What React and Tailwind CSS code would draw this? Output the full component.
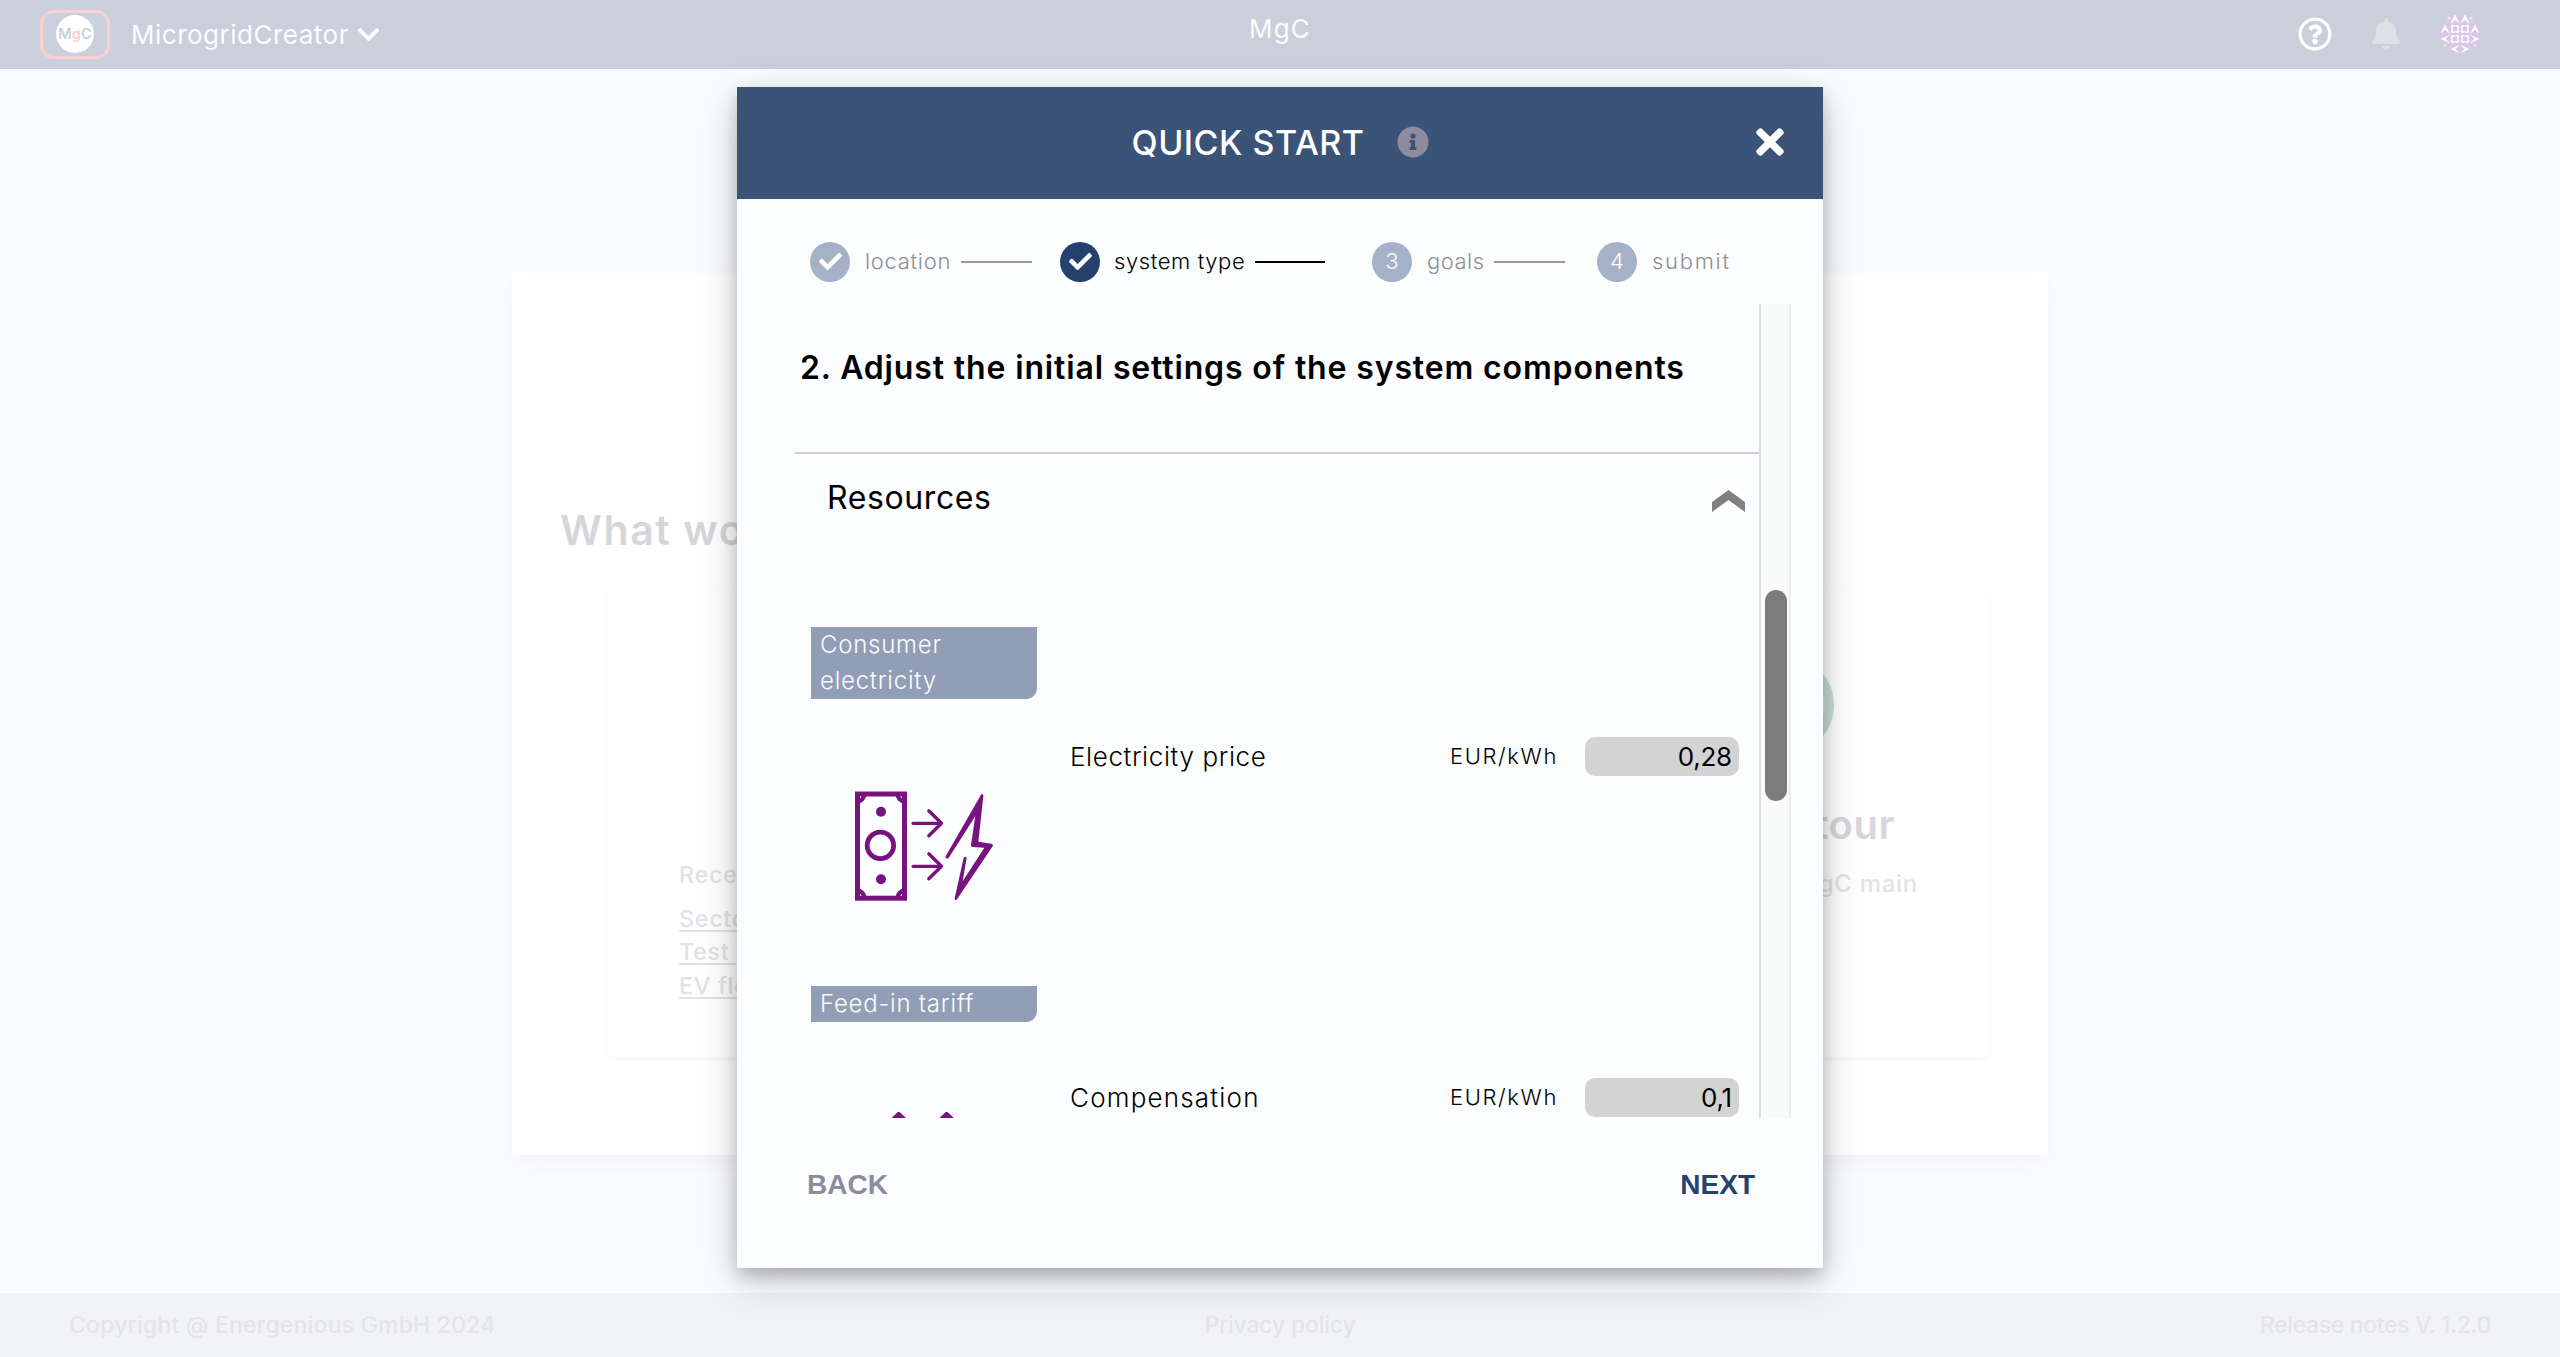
import React from "react";
import { FaTimes, FaInfoCircle, FaCheck, FaChevronDown, FaRegQuestionCircle, FaBell } from "react-icons/fa";

function Avatar() {
  const cells = [[30, 30], [60, 30], [30, 60], [60, 60]];
  const up = [[30, 0], [60, 0], [0, 30], [90, 30]];
  return (
    <svg viewBox="0 0 120 120" className="size-10">
      <clipPath id="round"><circle cx="60" cy="60" r="60" /></clipPath>
      <g clipPath="url(#round)">
        <rect width="120" height="120" fill="#dac6e6" />
        {up.map(([x, y]) => (
          <path key={`${x}-${y}`} transform={`translate(${x} ${y})`} d="M15 1 L29 30 L15 17 L1 30 Z" fill="#fff" />
        ))}
        {[[0, 60], [30, 90]].map(([x, y]) => (
          <path key={`l${x}`} transform={`translate(${x} ${y})`} d="M2 15 L30 2 L17 15 L30 28 Z" fill="#fff" />
        ))}
        {[[90, 60], [60, 90]].map(([x, y]) => (
          <path key={`r${x}`} transform={`translate(${x} ${y})`} d="M28 15 L0 2 L13 15 L0 28 Z" fill="#fff" />
        ))}
        {cells.map(([x, y]) => (
          <g key={`c${x}-${y}`} transform={`translate(${x} ${y})`}>
            <path d="M7 2 L15 5 L23 2 L28 7 L25 15 L28 23 L23 28 L15 25 L7 28 L2 23 L5 15 L2 7 Z" fill="#fff" />
            <rect x="8" y="8" width="14" height="14" fill="#dac6e6" />
          </g>
        ))}
        <path d="M18 14 L30 9 L30 16 Z M102 14 L90 9 L90 16 Z M12 90 L18 96 L12 102 Z M108 90 L102 96 L108 102 Z" fill="#fff" />
      </g>
    </svg>
  );
}

function TopBar() {
  return (
    <header className="flex h-[69px] shrink-0 items-center bg-[#c9cfdb] pb-px text-[#fbfcff]">
      <div className="flex flex-1 items-center px-10">
        <div className="flex h-[49px] w-[70px] items-center justify-center rounded-[14px] border-3 border-[#fbcfcf]">
          <div className="flex size-[38px] items-center justify-center rounded-full bg-white text-[14.5px] font-semibold tracking-[0.2px] text-[#c9cfdb]">
            M<span className="text-[#fbcfcf]">g</span>C
          </div>
        </div>
        <span className="ml-[21px] text-[26px] tracking-[0.5px]">MicrogridCreator</span>
        <FaChevronDown className="ml-[7px] size-[25px]" />
      </div>
      <span className="pb-3 text-[26px] tracking-[1.2px]">MgC</span>
      <div className="flex flex-1 items-center justify-end pr-20">
        <FaRegQuestionCircle className="size-[34px] text-white" />
        <FaBell className="ml-[38px] size-8 text-[#dfdfe6]" />
        <div className="ml-[38px]"><Avatar /></div>
      </div>
    </header>
  );
}

const cardStyle = "h-[470px] w-[408px] rounded-[7px] bg-white shadow-[0_2px_6px_1px_rgba(0,0,0,0.03)]";

function Landing() {
  return (
    <main className="flex flex-1 flex-col items-center pt-[204px]">
      <div className="h-[882px] w-[1536px] bg-white shadow-[0_8px_16px_rgba(0,0,0,0.02),0_12px_40px_rgba(0,0,0,0.02)]">
        <h1 className="pt-[232px] pl-[48px] text-[41px] leading-[50px] font-semibold tracking-[1.6px] text-[#d6d6da]">
          What would
        </h1>
        <div className="mt-8 flex justify-between pr-[59px] pl-24">
          <section className={cardStyle}>
            <div className="flex flex-col pt-[271px] pl-[71px] text-[23.5px] leading-[33.5px] font-medium tracking-[0.6px] text-[#e2e2e7]">
              <span className="mb-2.5">Recent projects</span>
              <span className="underline decoration-2 underline-offset-3">Sector coupling</span>
              <span className="underline decoration-2 underline-offset-3">Test project</span>
              <span className="underline decoration-2 underline-offset-3">EV fleet</span>
            </div>
          </section>
          <section className={cardStyle} />
          <section className={cardStyle}>
            <div className="flex flex-col items-center pt-[69px] text-[#d6d6dc]">
              <div className="size-[98px] rounded-full border-9 border-[#c8dfd8] bg-[#e4e4e4]" />
              <h2 className="mt-[46px] text-[40px] leading-[50px] font-semibold tracking-[0.6px]">Take a tour</h2>
              <p className="mt-[17px] text-[24px] leading-[34px] font-medium tracking-[0.7px] text-[#e2e2e7]">Explore the MgC main</p>
            </div>
          </section>
        </div>
      </div>
    </main>
  );
}

function Footer() {
  return (
    <footer className="flex h-16 shrink-0 items-center bg-[#f2f3f7] px-[69px] text-[23px] font-medium text-[#e3e3e8]">
      <span className="flex-1 tracking-[0.2px]">Copyright @ Energenious GmbH 2024</span>
      <span className="tracking-[-0.2px]">Privacy policy</span>
      <span className="flex-1 text-right tracking-[-0.35px]">Release notes V. 1.2.0</span>
    </footer>
  );
}

function Badge({ active, children }) {
  return (
    <div className={`flex size-10 shrink-0 items-center justify-center rounded-full text-[22px] text-white ${active ? "bg-[#25426f]" : "bg-[#a5b1c6]"}`}>
      {children}
    </div>
  );
}

function Steps() {
  return (
    <div className="flex h-[105px] items-start pt-[42px] pl-[73px] text-[22px] font-light text-[#8f8f8f]">
      <div className="flex h-[41px] items-center">
        <Badge><FaCheck className="size-[23px]" /></Badge>
        <span className="ml-[15px] w-[96px] tracking-[0.7px]">location</span>
        <div className="h-0.5 w-[71px] bg-[#999]" />
      </div>
      <div className="ml-[28px] flex h-[41px] items-center text-black">
        <Badge active><FaCheck className="size-[23px]" /></Badge>
        <span className="ml-[14px] w-[141px] tracking-[0.6px] whitespace-nowrap">system type</span>
        <div className="h-0.5 w-[70px] bg-black" />
      </div>
      <div className="ml-[47px] flex h-[41px] items-center">
        <Badge>3</Badge>
        <span className="ml-[15px] w-[67px] tracking-[0.5px]">goals</span>
        <div className="h-0.5 w-[71px] bg-[#999]" />
      </div>
      <div className="ml-[32px] flex h-[41px] items-center">
        <Badge>4</Badge>
        <span className="ml-[15px] tracking-[1.7px]">submit</span>
      </div>
    </div>
  );
}

function PriceIcon() {
  return (
    <svg viewBox="0 0 150 120" className="mt-[86px] ml-[39px] h-[120px] w-[150px]" fill="none" stroke="#76137e">
      <rect x="7.5" y="9" width="47" height="104.2" strokeWidth="5" />
      <g strokeWidth="4.5">
        <path d="M14.5 9 A8 8 0 0 1 7.5 16.5 M47.5 9 A8 8 0 0 0 54.5 16.5" />
        <path d="M14.5 113 A8 8 0 0 0 7.5 105.5 M47.5 113 A8 8 0 0 1 54.5 105.5" />
      </g>
      <circle cx="30.4" cy="60.4" r="13.2" strokeWidth="4.8" />
      <g fill="#76137e" stroke="none">
        <circle cx="31" cy="26.7" r="5" />
        <circle cx="31" cy="94.2" r="5" />
        <path
          transform="translate(-70 -35) scale(0.33333)"
          d="M496 320 L604 133 Q610 130 610 139 L595 275 L634 281 Q641 283 638 289 L530 449 Q524 452 524 445 L551 323 Q556 317 560 323 L548 394 L613 293 L577 291 Q572 290 573 285 L586 198 L506 324 Q499 329 496 320 Z"
        />
      </g>
      <g strokeWidth="3.3" strokeLinecap="round" strokeLinejoin="round">
        <path d="M63 38.3 H91.5 M78.8 25.8 L91.5 38.3 L78.8 50.8" />
        <path d="M63 81.3 H91.5 M78.8 68.8 L91.5 81.3 L78.8 93.8" />
      </g>
    </svg>
  );
}

function FeedInIcon() {
  return (
    <svg viewBox="0 0 150 120" className="mt-[86px] ml-[39px] h-[120px] w-[150px]" fill="#76137e">
      <path d="M40 11.5 L47.5 4.2 Q48.7 3.2 49.9 4.2 L57.5 11.5 H40 Z" />
      <path d="M88 11.5 L95.4 4.2 Q96.6 3.2 97.8 4.2 L105.4 11.5 H88 Z" />
    </svg>
  );
}

function Component({ label, name, unit, value, icon, className, rowClass, nameClass }) {
  return (
    <div className={`flex shrink-0 items-start pl-4 ${className}`}>
      <div className="w-[259px] shrink-0">
        <div className="w-[226px] rounded-br-[11px] bg-[#919eb6] pl-[9px] text-[24px] leading-9 font-light tracking-[0.75px] whitespace-nowrap text-[#fbfcff]">
          {label.map((line) => <div key={line}>{line}</div>)}
        </div>
        {icon}
      </div>
      <div className={`flex h-[39px] items-center text-[26px] ${rowClass}`}>
        <span className={`w-[380px] font-light ${nameClass}`}>{name}</span>
        <span className="w-[108px] text-[22px] font-light tracking-[1.6px]">{unit}</span>
        <div className="ml-[27px] flex h-[39px] w-[154px] items-center justify-end rounded-[10px] bg-[#d3d3d3] pr-[7px] tracking-[-0.2px]">
          {value}
        </div>
      </div>
    </div>
  );
}

function Dialog() {
  return (
    <div className="absolute inset-0 flex items-start justify-center pt-[87px]">
      <div className="flex h-[1181px] w-[1086px] flex-col bg-[#fcfdff] shadow-[0_8px_16px_rgba(0,0,0,0.2),0_12px_40px_rgba(0,0,0,0.19)]">
        <div className="flex h-28 shrink-0 items-center bg-[#3a5377] px-[33px] pb-0.5 text-white">
          <div className="flex-1" />
          <span className="text-[34px] font-medium tracking-[0.5px]">QUICK START</span>
          <FaInfoCircle className="ml-8 size-8 text-[#8e8b9c]" />
          <div className="flex flex-1 justify-end"><FaTimes className="size-10" /></div>
        </div>
        <Steps />
        <div className="ml-[58px] flex h-[814px] w-[996px]">
          <div className="flex w-[964px] flex-col overflow-hidden">
            <h2 className="pt-11 pl-[5px] text-[32px] leading-10 font-semibold tracking-[0.86px] whitespace-nowrap">
              2. Adjust the initial settings of the system components
            </h2>
            <div className="mt-16 h-0.5 shrink-0 bg-[#d0d0d3]" />
            <div className="flex h-[88px] shrink-0 items-center justify-between pr-[14px] pl-8">
              <span className="text-[32px] tracking-[0.6px]">Resources</span>
              <svg viewBox="0 0 33 22" className="mt-1.5 h-[22px] w-[33px]" fill="#808080">
                <path d="M16.5 0 L33 12 V22 L16.5 10 L0 22 V12 Z" />
              </svg>
            </div>
            <Component
              className="mt-[85px] h-[359px]"
              rowClass="mt-[110px]"
              nameClass="tracking-[0.6px]"
              label={["Consumer", "electricity"]}
              name="Electricity price"
              unit="EUR/kWh"
              value="0,28"
              icon={<PriceIcon />}
            />
            <Component
              className="h-[359px]"
              rowClass="mt-[92px]"
              nameClass="tracking-[1.2px]"
              label={["Feed-in tariff"]}
              name="Compensation"
              unit="EUR/kWh"
              value="0,1"
              icon={<FeedInIcon />}
            />
          </div>
          <div className="w-8 border-x-2 border-l-[#dedede] border-r-[#ececec] bg-[#f9fbfa] px-1 pt-[286px]">
            <div className="h-[211px] w-[22px] rounded-full bg-[#7c7c7c]" />
          </div>
        </div>
        <div className="flex h-[134px] items-center justify-between pr-[68px] pl-[70px] font-['Liberation_Sans',sans-serif] text-[28px] font-bold">
          <span className="text-[#8e8b9f]">BACK</span>
          <span className="text-[#25426f]">NEXT</span>
        </div>
      </div>
    </div>
  );
}

export default function App() {
  return (
    <div className="relative flex h-[1357px] w-[2560px] flex-col overflow-hidden bg-[#fbfcff] font-['Inter',sans-serif] text-black">
      <TopBar />
      <Landing />
      <Footer />
      <Dialog />
    </div>
  );
}
